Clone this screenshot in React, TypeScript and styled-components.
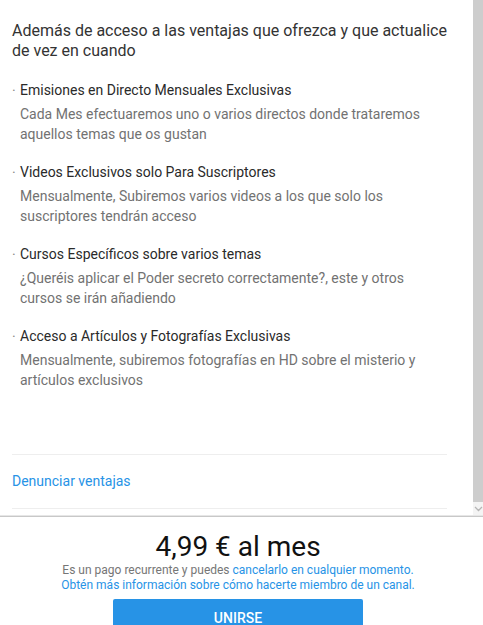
import React from "react";
import styled, { createGlobalStyle } from "styled-components";

interface Perk {
  title: string;
  description: string;
}

const perks: Perk[] = [
  {
    title: "Emisiones en Directo Mensuales Exclusivas",
    description:
      "Cada Mes efectuaremos uno o varios directos donde trataremos aquellos temas que os gustan",
  },
  {
    title: "Videos Exclusivos solo Para Suscriptores",
    description:
      "Mensualmente, Subiremos varios videos a los que solo los suscriptores tendrán acceso",
  },
  {
    title: "Cursos Específicos sobre varios temas",
    description:
      "¿Queréis aplicar el Poder secreto correctamente?, este y otros cursos se irán añadiendo",
  },
  {
    title: "Acceso a Artículos y Fotografías Exclusivas",
    description:
      "Mensualmente, subiremos fotografías en HD sobre el misterio y artículos exclusivos",
  },
];

const App: React.FC = () => {
  return (
    <>
      <GlobalStyle />
      <Page>
        <ScrollArea>
          <Content>
            <Intro>Además de acceso a las ventajas que ofrezca y que actualice de vez en cuando</Intro>
            <PerkList>
              {perks.map((perk) => (
                <PerkItem key={perk.title}>
                  <PerkTitle>{perk.title}</PerkTitle>
                  <PerkDescription>{perk.description}</PerkDescription>
                </PerkItem>
              ))}
            </PerkList>
            <ReportRow>
              <Link href="#">Denunciar ventajas</Link>
            </ReportRow>
          </Content>
          <ScrollRail>
            <Thumb />
            <ArrowButton>
              <svg width="9" height="6" viewBox="0 0 9 6">
                <path d="M1 1 L4.5 4.5 L8 1" fill="none" stroke="#b5b5b5" strokeWidth="1.3" />
              </svg>
            </ArrowButton>
          </ScrollRail>
        </ScrollArea>
        <Footer>
          <Price>4,99 € al mes</Price>
          <Note>
            Es un pago recurrente y puedes <Link href="#">cancelarlo en cualquier momento.</Link>
            <br />
            <Link href="#">Obtén más información sobre cómo hacerte miembro de un canal.</Link>
          </Note>
          <JoinButton>Unirse</JoinButton>
        </Footer>
      </Page>
    </>
  );
};

export default App;

// Styled components
const GlobalStyle = createGlobalStyle`
  html, body {
    margin: 0;
    padding: 0;
    background: #fff;
    font-family: Roboto, "Noto Sans", Arial, sans-serif;
  }
`;

const Page = styled.div`
  width: 483px;
  height: 625px;
  display: flex;
  flex-direction: column;
  overflow: hidden;
  background: #fff;
`;

const ScrollArea = styled.div`
  height: 516px;
  flex-shrink: 0;
  display: flex;
`;

const Content = styled.div`
  width: 435px;
  margin-left: 12px;
  padding-top: 21px;
  display: flex;
  flex-direction: column;
`;

const Intro = styled.div`
  font-size: 16px;
  line-height: 20px;
  color: #333;
`;

const PerkList = styled.ul`
  list-style: none;
  margin: 19px 0 0;
  padding: 0;
  display: flex;
  flex-direction: column;
  gap: 18px;
`;

const PerkItem = styled.li`
  position: relative;
  padding-left: 8px;
  display: flex;
  flex-direction: column;
  gap: 4px;

  &::before {
    content: "·";
    position: absolute;
    left: 0;
    top: 1px;
    font-size: 14px;
    line-height: 20px;
    color: #888;
  }
`;

const PerkTitle = styled.span`
  font-size: 14px;
  line-height: 20px;
  color: #2a2a2a;
`;

const PerkDescription = styled.span`
  font-size: 14px;
  line-height: 20px;
  color: #727272;
  padding-right: 8px;
`;

const ReportRow = styled.div`
  margin-top: 64px;
  padding: 16px 0 17px;
  border-top: 1px solid #eee;
  border-bottom: 1px solid #eee;
  font-size: 14px;
  line-height: 20px;
`;

const Link = styled.a`
  color: #2793e6;
  text-decoration: none;
`;

const ScrollRail = styled.div`
  width: 10px;
  margin-left: auto;
  display: flex;
  flex-direction: column;
`;

const Thumb = styled.div`
  height: 502px;
  background: #cdcdcd;
`;

const ArrowButton = styled.div`
  flex: 1;
  display: flex;
  align-items: center;
  justify-content: center;
  background: #f4f4f4;
`;

const Footer = styled.div`
  border-top: 1px solid #c8c8c8;
  box-shadow: 0 -1px 0 #e6e6e6;
  padding: 14px 7px 0 0;
  display: flex;
  flex-direction: column;
  align-items: center;
`;

const Price = styled.div`
  font-size: 28px;
  line-height: 32px;
  color: #111;
`;

const Note = styled.div`
  font-size: 12px;
  line-height: 15px;
  color: #767676;
  text-align: center;
`;

const JoinButton = styled.button`
  margin-top: 6px;
  width: 250px;
  height: 38px;
  border: none;
  border-radius: 2px;
  background: #2793e6;
  color: #fff;
  font-family: Roboto, "Noto Sans", Arial, sans-serif;
  font-size: 14px;
  font-weight: 500;
  text-transform: uppercase;
  cursor: pointer;
`;
